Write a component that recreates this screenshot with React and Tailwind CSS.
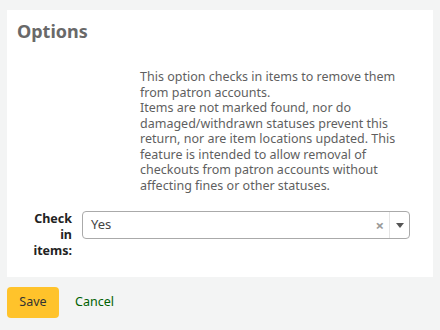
export default function App() {
  return (
    <div
      className="min-h-[330px] w-[440px] bg-[#f3f4f4] px-[7px] pt-[10px]"
      style={{ fontFamily: '"Noto Sans", "Open Sans", sans-serif' }}
    >
      <div className="bg-white pl-[10px] pr-[10px] pt-[9px] pb-[18px]">
        <h3 className="text-[18px] leading-[24px] font-bold text-[#696969]">Options</h3>

        <div className="mt-[26px] ml-[123px] w-[272px] text-[12.5px] leading-[15.5px] text-[#5f5f5f]">
          This option checks in items to remove them from patron accounts.
          <br />
          Items are not marked found, nor do damaged/withdrawn statuses prevent this return, nor are item
          locations updated. This feature is intended to allow removal of checkouts from patron accounts
          without affecting fines or other statuses.
        </div>

        <div className="mt-[18px] flex items-start">
          <label className="ml-[10px] w-[45px] text-right text-[12.5px] leading-[16px] font-bold text-[#222]">
            Check in items:
          </label>
          <div className="ml-[10px] flex h-[28px] w-[328px] items-center rounded-[4px] border border-[#aaa] bg-white">
            <span className="flex-1 pl-[8px] text-[13px] text-[#444]">Yes</span>
            <span className="pr-[5px] text-[15px] leading-none font-bold text-[#999]">×</span>
            <span className="flex h-full w-[20px] items-center justify-center border-l border-[#e5e5e5]">
              <svg width="8" height="5" viewBox="0 0 8 5">
                <path d="M0 0h8L4 5z" fill="#555" />
              </svg>
            </span>
          </div>
        </div>
      </div>

      <div className="mt-[10px] flex items-center">
        <button className="h-[31px] w-[52px] rounded-[4px] bg-[#ffc32b] text-[12.5px] text-[#333]">Save</button>
        <a className="ml-[16px] text-[12.5px] text-[#006100]" href="#">
          Cancel
        </a>
      </div>
    </div>
  );
}
